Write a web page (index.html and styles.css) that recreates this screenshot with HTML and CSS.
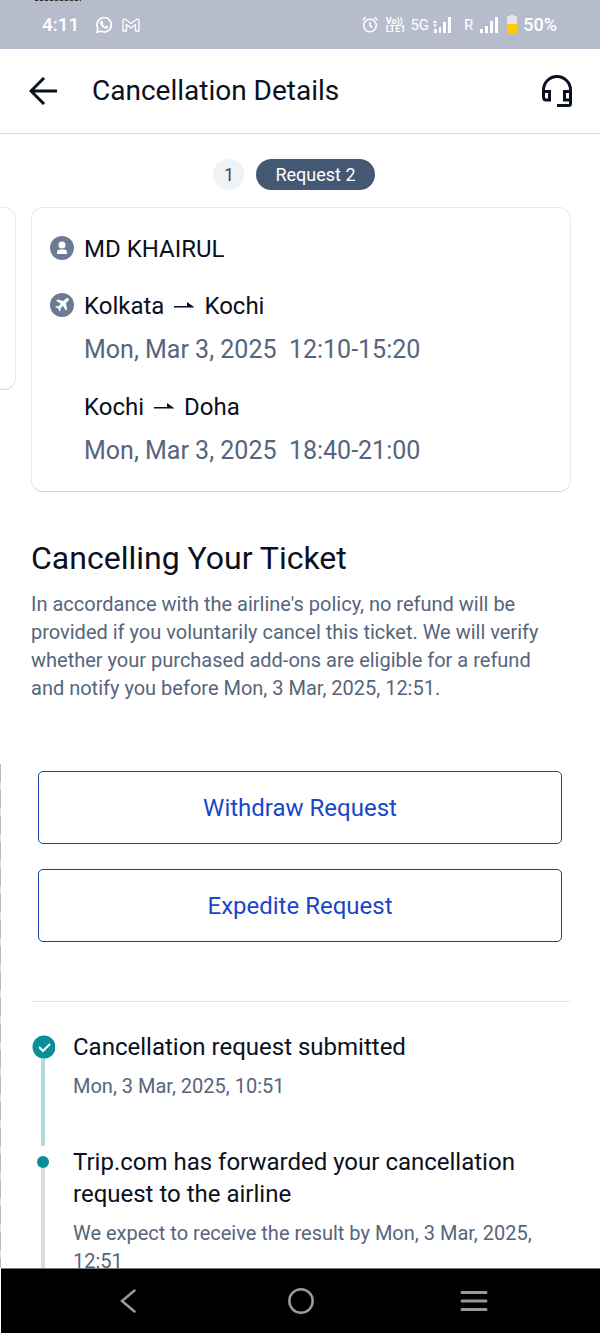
FILE: index.html
```html
<!DOCTYPE html>
<html lang="en">
<head>
    <meta charset="utf-8">
    <meta name="viewport" content="width=device-width, initial-scale=1">
    <title>Cancellation Details</title>
    <link rel="stylesheet" href="styles.css">
</head>
<body>

<div class="status-bar">
    <div class="status-left">
        <span class="clock">4:11</span>
        <svg width="18" height="18" viewBox="0 0 20 20" fill="none" stroke="#fff" stroke-width="1.800">
            <path d="M2 18l1.200-4.300a8 8 0 1 1 3.200 3.100z"/>
            <path d="M6.500 5.500l1.500-.5 1.300 2.600-.9 1.300c.7 1.300 1.500 2 2.800 2.700l1.200-1.100 2.500 1.300c0 1.500-1.200 2.300-2.500 2.300-3.500-.3-6.500-3.500-6.800-6.500 0-.9.300-1.600.9-2.100z" fill="#fff" stroke="none"/>
        </svg>
        <svg width="18" height="14" viewBox="0 0 18 14" fill="none" stroke="#fff" stroke-width="1.300" stroke-linejoin="round">
            <path d="M1 13V2.500C1 1 2.500.5 3.700 1.400L9 5.500l5.300-4.100C15.500.5 17 1 17 2.500V13h-3.500V6.500L9 10 4.500 6.500V13z"/>
        </svg>
    </div>
    <div class="status-right">
        <svg width="16" height="18" viewBox="0 0 16 18" fill="none" stroke="#fff" stroke-width="1.600">
            <circle cx="8" cy="9.500" r="6.300"/>
            <path d="M8 6v4l2.500 1.700M.7 4l3-2.600M15.300 4l-3-2.600"/>
        </svg>
        <span class="volte"><span>Vo))</span><span>LTE1</span></span>
        <span class="network">5G</span>
        <svg class="bars" width="18" height="17" viewBox="0 0 18 17" fill="#fff">
            <path d="M0 7l2-3 2 3zM0 8.500h4l-2 3zM1 13h3v4H1zM6 11h2v6H6zM10 6h3v11h-3zM15 1h3v16h-3z"/>
        </svg>
        <span class="network roaming">R</span>
        <svg width="18" height="17" viewBox="0 0 18 17" fill="#fff">
            <path d="M0 13h3v4H0zM5 10h3v7H5zM10 5h3v12h-3zM15 1h3v16h-3z"/>
        </svg>
        <svg class="battery" width="10" height="19" viewBox="0 0 10 19">
            <path d="M3 0h4v1h1.500Q10 1 10 2.500V10H0V2.500Q0 1 1.500 1H3z" fill="#e4e6ea"/>
            <path d="M0 9h10v8.500q0 1.500-1.500 1.500h-7Q0 19 0 17.500z" fill="#fc0"/>
        </svg>
        <span class="percent">50%</span>
    </div>
</div>

<header class="header">
    <button class="icon-button" aria-label="Back">
        <svg width="28" height="28" viewBox="0 0 28 28" fill="none" stroke="#0a1020" stroke-width="3">
            <path d="M28 14H3M15 1L2 14l13 13"/>
        </svg>
    </button>
    <h1>Cancellation Details</h1>
    <button class="icon-button" aria-label="Customer service">
        <svg width="30" height="32" viewBox="0 0 30 32" fill="none" stroke="#0a1020" stroke-width="3">
            <path d="M1.500 16v-1a13.500 13.500 0 0 1 27 0v13.500q0 2-2 2H15"/>
            <path d="M1.500 16.500h6v8.500h-3q-3 0-3-3zM28.500 16.500h-6v8.500h6"/>
        </svg>
    </button>
</header>

<main class="content">
    <div class="tabs">
        <button class="tab">1</button>
        <button class="tab active">Request 2</button>
    </div>

    <div class="cards">
        <div class="card previous"></div>
        <section class="card">
            <div class="row name">
                <svg class="row-icon" width="24" height="24" viewBox="0 0 24 24">
                    <circle cx="12" cy="12" r="12" fill="#6b7b94"/>
                    <circle cx="12" cy="9" r="3.500" fill="#fff"/>
                    <path d="M7 18v-1.500Q7 13.500 10 13.500h4q3 0 3 3V18z" fill="#fff"/>
                </svg>
                <span>MD KHAIRUL</span>
            </div>
            <div class="row">
                <svg class="row-icon" width="24" height="24" viewBox="0 0 24 24">
                    <circle cx="12" cy="12" r="12" fill="#6b7b94"/>
                    <path d="M18.500 5.500c-1-.8-2.200-.3-3 .5l-2.100 2-5.900-1.500-1.300 1.200 4.600 3-2.300 2.600-2.300-.3-1 1 3 1.500 1.500 3 1-1-.2-2.300 2.500-2.300 3 4.700 1.200-1.300-1.400-6 2-2c.8-.8 1.400-2 .7-2.800z" fill="#fff"/>
                </svg>
                <span>Kolkata</span>
                <svg width="20" height="8" viewBox="0 0 20 8"><path d="M0 4h13V0l7 5v.500H0z" fill="#0a1020"/></svg>
                <span>Kochi</span>
            </div>
            <p class="time">Mon, Mar 3, 2025&nbsp; 12:10-15:20</p>
            <div class="row indent">
                <span>Kochi</span>
                <svg width="20" height="8" viewBox="0 0 20 8"><path d="M0 4h13V0l7 5v.500H0z" fill="#0a1020"/></svg>
                <span>Doha</span>
            </div>
            <p class="time">Mon, Mar 3, 2025&nbsp; 18:40-21:00</p>
        </section>
    </div>

    <section class="notice">
        <h2>Cancelling Your Ticket</h2>
        <p>In accordance with the airline's policy, no refund will be provided if you voluntarily cancel this ticket. We will verify whether your purchased add-ons are eligible for a refund and notify you before Mon, 3 Mar, 2025, 12:51.</p>
    </section>

    <div class="actions">
        <button>Withdraw Request</button>
        <button>Expedite Request</button>
    </div>

    <ol class="steps">
        <li class="step done">
            <div class="marker">
                <svg width="24" height="24" viewBox="0 0 24 24">
                    <circle cx="13" cy="12" r="11.500" fill="#0a8f98"/>
                    <path d="M8 12l4 4 7-7" fill="none" stroke="#fff" stroke-width="2"/>
                </svg>
            </div>
            <div class="step-text">
                <h3>Cancellation request submitted</h3>
                <p>Mon, 3 Mar, 2025, 10:51</p>
            </div>
        </li>
        <li class="step">
            <div class="marker"><span class="dot"></span></div>
            <div class="step-text">
                <h3>Trip.com has forwarded your cancellation request to the airline</h3>
                <p>We expect to receive the result by Mon, 3 Mar, 2025, 12:51</p>
            </div>
        </li>
    </ol>
</main>

<nav class="nav-bar">
    <button aria-label="Back">
        <svg width="16" height="24" viewBox="0 0 16 24" fill="none" stroke="#999" stroke-width="2.500" stroke-linecap="round"><path d="M14.500 1.500L2 12l12.500 10.500"/></svg>
    </button>
    <button aria-label="Home">
        <svg width="26" height="26" viewBox="0 0 26 26" fill="none" stroke="#999" stroke-width="2.500"><circle cx="13" cy="13" r="11.700"/></svg>
    </button>
    <button aria-label="Recent apps">
        <svg width="28" height="22" viewBox="0 0 28 22" fill="none" stroke="#999" stroke-width="3" stroke-linecap="round"><path d="M2 2.500h24M2 11h24M2 19.500h24"/></svg>
    </button>
</nav>

</body>
</html>
```
FILE: styles.css
```css
* {
    box-sizing: border-box;
}
body {
    display: flex;
    flex-direction: column;
    height: 100vh;
    margin: 0;
    font-family: Roboto, sans-serif;
    color: #0a1020;
    background: #fff;
    overflow: hidden;
}
h1, h2, h3, p, ol {
    margin: 0;
    padding: 0;
    font-weight: 400;
}
button {
    padding: 0;
    border: none;
    background: none;
    color: inherit;
    font-family: inherit;
}
svg {
    display: block;
    flex: none;
}

/* status bar */
.status-bar {
    position: relative;
    display: flex;
    flex: none;
    justify-content: space-between;
    align-items: center;
    height: 49px;
    padding: 0 43px 0 42px;
    background: #b6bccb;
    color: #fff;
}
.status-bar::before {
    content: "";
    position: absolute;
    top: 0;
    left: 35px;
    width: 46px;
    height: 1px;
    background: repeating-linear-gradient(90deg, #333 0 3px, #999 3px 5px);
}
.status-left,
.status-right {
    display: flex;
    align-items: center;
}
.status-left svg {
    margin-left: 16px;
}
.status-left svg + svg {
    margin-left: 9px;
}
.clock {
    font-size: 19px;
    font-weight: 500;
}
.volte {
    display: flex;
    flex-direction: column;
    margin: 0 5px 0 8px;
    font-size: 9px;
    font-weight: 700;
    line-height: 8px;
}
.network {
    font-size: 15px;
    line-height: 20px;
}
.bars {
    margin-left: 4px;
}
.roaming {
    margin: 0 7px 0 13px;
}
.battery {
    margin: 0 6px 0 9px;
}
.percent {
    font-size: 18px;
    font-weight: 500;
}

/* page header */
.header {
    display: flex;
    flex: none;
    align-items: center;
    height: 85px;
    padding: 0 28px 0 29px;
    border-bottom: 1px solid #d8dbe2;
}
.header h1 {
    flex: 1;
    margin-left: 35px;
    font-size: 28px;
    line-height: 32px;
}

.content {
    position: relative;
    flex: 1;
    min-height: 0;
    overflow-y: auto;
    scrollbar-width: none;
}
.content::before {
    content: "";
    position: absolute;
    top: 630px;
    bottom: 0;
    left: 0;
    width: 1px;
    background: repeating-linear-gradient(#bbb 0 18px, #ddd 18px 26px);
}

.tabs {
    display: flex;
    justify-content: center;
    gap: 12px;
    padding: 25px 12px 17px 0;
}
.tab {
    min-width: 31px;
    height: 31px;
    border-radius: 16px;
    background: #f0f2f5;
    color: #3c4a63;
    font-size: 18px;
}
.tab.active {
    padding: 0 19px;
    background: #455873;
    color: #fff;
}

.cards {
    display: grid;
    grid-template-columns: 16px 1fr;
    align-items: start;
    gap: 15px;
    padding-right: 29px;
}
.card {
    padding: 25px 18px 24px;
    border: 1px solid #e8e9eb;
    border-bottom-color: #d5d6d8;
    border-radius: 12px;
    font-size: 24px;
    line-height: 32px;
}
.card.previous {
    height: 183px;
    padding: 0;
    border-left: none;
    border-radius: 0 12px 12px 0;
}
.row {
    display: flex;
    align-items: center;
    gap: 10px;
    margin-top: 25px;
}
.row.name {
    margin-top: 0;
}
.row-icon {
    margin-bottom: 3px;
}
.time {
    margin: 12px 0 0 34px;
    color: #56657c;
    font-size: 25px;
}
.indent {
    margin-left: 34px;
}

.notice {
    padding: 46px 48px 0 31px;
}
.notice h2 {
    font-size: 32px;
    line-height: 40px;
}
.notice p {
    margin-top: 12px;
    color: #56657c;
    font-size: 20px;
    line-height: 28px;
}

.actions {
    display: grid;
    gap: 25px;
    padding: 69px 38px 59px;
}
.actions button {
    height: 73px;
    border: 1px solid #1a41b8;
    border-radius: 5px;
    color: #1a46c8;
    font-size: 24px;
}

/* progress steps */
.steps {
    margin: 0 30px 0 31px;
    padding-top: 29px;
    border-top: 1px solid #e2e4e8;
    list-style: none;
}
.step {
    display: flex;
    gap: 18px;
}
.marker {
    display: flex;
    flex: none;
    flex-direction: column;
    align-items: center;
    width: 24px;
    padding-top: 10px;
}
.marker::after {
    content: "";
    flex: 1;
    width: 4px;
    background: #d8dbe3;
}
.done .marker {
    padding-top: 4px;
}
.done .marker::after {
    background: #b0dcde;
}
.dot {
    width: 12px;
    height: 12px;
    border-radius: 50%;
    background: #0a8f98;
}
.step-text {
    flex: 1;
    padding-bottom: 46px;
}
.step h3 {
    font-size: 24px;
    line-height: 32px;
}
.step p {
    margin-top: 9px;
    color: #56657c;
    font-size: 20px;
    line-height: 28px;
}

.nav-bar {
    display: grid;
    flex: none;
    grid-template-columns: 1fr 1fr 1fr;
    height: 65px;
    margin-left: 1px;
    padding: 0 40px;
    border-top: 1px solid #777;
    background: #000;
}
.nav-bar button {
    display: flex;
    justify-content: center;
    align-items: center;
}
```
